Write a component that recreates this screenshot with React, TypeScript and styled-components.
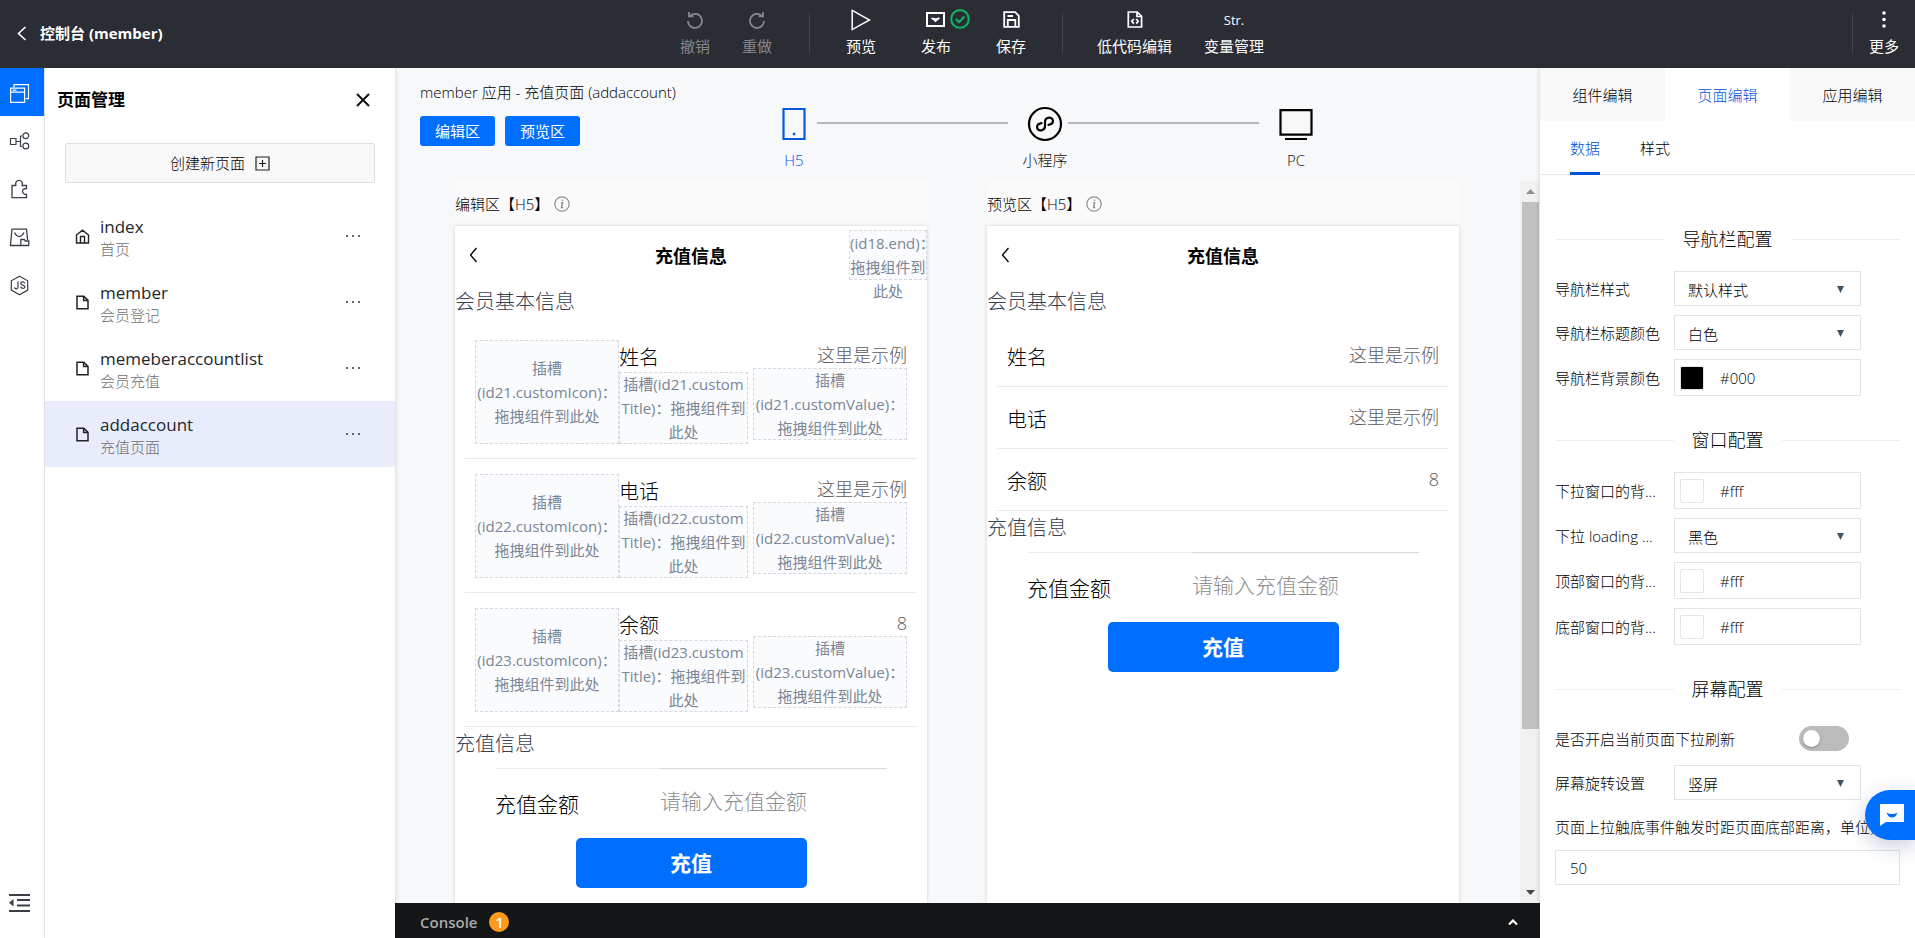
import React, { useState } from 'react';
import styled, { createGlobalStyle } from 'styled-components';

const BLUE = '#006eff';
const LINK = '#0052d9';

const GlobalStyle = createGlobalStyle`
  * { box-sizing: border-box; }
  body {
    margin: 0;
    font-family: "Open Sans", "Noto Sans CJK SC", sans-serif;
    font-size: 15px;
    line-height: 22px;
    font-weight: 300;
    color: #000;
    background: #fff;
  }
  button, input, select {
    font: inherit;
    color: inherit;
    margin: 0;
    padding: 0;
    border: 0;
    background: none;
    border-radius: 0;
  }
  button { cursor: pointer; }
  h1, h2, h3, p, ul { margin: 0; padding: 0; font-weight: inherit; font-size: inherit; }
  ul { list-style: none; }
  a { color: inherit; text-decoration: none; }
  svg { display: block; flex: none; }
`;

/* ---------- shell ---------- */

const Shell = styled.div`
  height: 100vh;
  display: flex;
  flex-direction: column;
  overflow: hidden;
`;

const Header = styled.header`
  flex: none;
  height: 68px;
  display: grid;
  grid-template-columns: 1fr auto 1fr;
  background: #2a2d34;
  color: #fff;
`;

const BackLink = styled.a`
  display: flex;
  align-items: center;
  gap: 13px;
  padding: 0 0 2px 17px;
  font-weight: 700;
`;

const Toolbar = styled.div`
  display: flex;
  padding-top: 7px;
  margin-left: 29px;
`;

const Tool = styled.button<{ $gap?: number }>`
  display: flex;
  flex-direction: column;
  align-items: center;
  align-self: flex-start;
  gap: 3px;
  margin-left: ${(p) => p.$gap ?? 0}px;
  font-weight: 400;
  white-space: nowrap;
  &:disabled { color: #85878b; cursor: default; }
`;

const ToolIcon = styled.span`
  position: relative;
  height: 25px;
  display: flex;
  align-items: center;
  justify-content: center;
  font-size: 13px;
`;

const StatusBadge = styled.span`
  position: absolute;
  left: 24px;
  top: 2px;
`;

const ToolDivider = styled.span<{ $gap?: number }>`
  width: 1px;
  height: 40px;
  margin-top: 6px;
  margin-left: ${(p) => p.$gap ?? 0}px;
  background: #43464c;
`;

const HeaderEnd = styled.div`
  display: flex;
  justify-content: flex-end;
  padding: 7px 16px 0 0;
`;

const Main = styled.div`
  flex: 1;
  min-height: 0;
  display: flex;
`;

/* ---------- left rail and pages ---------- */

const Rail = styled.nav`
  flex: none;
  width: 45px;
  display: flex;
  flex-direction: column;
  padding-bottom: 12px;
  border-right: 1px solid #e7e8ec;
`;

const RailButton = styled.button<{ $active?: boolean }>`
  height: 48px;
  padding: 2px 0 0 9px;
  display: flex;
  align-items: center;
  color: ${(p) => (p.$active ? '#fff' : '#3a3f47')};
  background: ${(p) => (p.$active ? BLUE : 'transparent')};
`;

const RailSpacer = styled.div`
  flex: 1;
`;

const PagesPanel = styled.aside`
  position: relative;
  flex: none;
  width: 350px;
  background: #fff;
  box-shadow: 1px 0 4px rgba(0, 0, 0, 0.12);
`;

const PanelHead = styled.div`
  display: flex;
  align-items: center;
  justify-content: space-between;
  padding: 20px 25px 0 12px;
  line-height: 24px;
`;

const PanelTitle = styled.h2`
  font-size: 17px;
  font-weight: 700;
`;

const CreateButton = styled.button`
  display: flex;
  align-items: center;
  justify-content: center;
  gap: 10px;
  width: 310px;
  height: 40px;
  margin: 31px 20px 20px;
  border: 1px solid #dcdfe3;
  border-radius: 2px;
  background: #f8f8f8;
`;

const PageItem = styled.li<{ $active?: boolean }>`
  display: flex;
  align-items: center;
  height: 66px;
  padding: 0 34px 0 30px;
  background: ${(p) => (p.$active ? '#e9edfb' : 'transparent')};
`;

const PageLink = styled.a`
  flex: 1;
  display: flex;
  align-items: center;
  gap: 10px;
`;

const PageText = styled.span`
  padding-top: 3px;
`;

const PageName = styled.span`
  display: block;
  font-size: 17px;
  font-weight: 400;
  color: #23262b;
`;

const PageNote = styled.span`
  display: block;
  color: #6f6f6f;
`;

/* ---------- canvas ---------- */

const Canvas = styled.main`
  flex: 1;
  min-width: 0;
  display: flex;
  flex-direction: column;
  background: #f6f8fa;
`;

const CanvasHead = styled.div`
  flex: none;
  height: 113px;
  display: flex;
  padding-left: 25px;
`;

const CanvasInfo = styled.div`
  flex: 0 0 351px;
  padding-top: 13px;
`;

const ModeButtons = styled.div`
  display: flex;
  gap: 10px;
  margin-top: 13px;
`;

const ModeButton = styled.button`
  width: 75px;
  height: 30px;
  border-radius: 3px;
  background: ${BLUE};
  color: #fff;
  font-weight: 400;
`;

const Stepper = styled.div`
  flex: 1;
  display: flex;
  padding-top: 38px;
`;

const Step = styled.button<{ $active?: boolean }>`
  width: 46px;
  display: flex;
  flex-direction: column;
  align-items: center;
  align-self: flex-start;
  gap: 7px;
  white-space: nowrap;
  color: ${(p) => (p.$active ? '#005be0' : '#111')};
`;

const StepLine = styled.span`
  flex: 0 1 191px;
  height: 2px;
  margin: 16px 14px 0 0;
  background: #b5b7ba;
`;

const Workspace = styled.div`
  flex: 1;
  min-height: 0;
  display: flex;
`;

const Devices = styled.div`
  flex: 1;
  min-width: 0;
  display: flex;
  gap: 60px;
  padding: 0 61px 0 60px;
  overflow: hidden;
`;

const DeviceColumn = styled.section`
  flex: 1;
  min-width: 0;
  display: flex;
  flex-direction: column;
`;

const DeviceLabel = styled.h3`
  flex: none;
  height: 44px;
  padding-top: 2px;
  display: flex;
  align-items: center;
  gap: 5px;
  background: #fafafa;
`;

const Device = styled.div`
  flex: 1 0 auto;
  margin-top: 1px;
  background: #fff;
  box-shadow: 0 0 4px rgba(0, 0, 0, 0.16);
`;

const DeviceNav = styled.div`
  position: relative;
  height: 59px;
  display: flex;
  align-items: center;
  justify-content: center;
  font-size: 18px;
  font-weight: 700;
`;

const NavBack = styled.button`
  position: absolute;
  left: 14px;
  top: 21px;
`;

const Slot = styled.div`
  display: flex;
  flex-direction: column;
  justify-content: center;
  border: 1px dashed #d5d9df;
  background: #fafbfd;
  color: #7b8696;
  font-size: 15px;
  font-weight: 400;
  line-height: 24px;
  text-align: center;
  white-space: nowrap;
`;

const NavSlot = styled(Slot)`
  position: absolute;
  right: 0;
  top: 4px;
  width: 78px;
  height: 50px;
  justify-content: flex-start;
`;

const SectionTitle = styled.h3`
  height: 34px;
  line-height: 34px;
  font-size: 20px;
  color: #38404f;
`;

const Cells = styled.ul`
  padding: 6px 10px 0;
`;

const Cell = styled.li<{ $edit?: boolean }>`
  display: grid;
  grid-template-columns: ${(p) => (p.$edit ? '144px 129px 1fr' : '1fr auto')};
  align-items: start;
  height: ${(p) => (p.$edit ? 134 : 62)}px;
  padding: 15px 10px 0;
  border-bottom: 1px solid #e8eaec;
`;

const CellTitle = styled.div`
  height: 32px;
  line-height: 36px;
  font-size: 20px;
`;

const CellValue = styled.div`
  height: 28px;
  line-height: 30px;
  font-size: 18px;
  color: #5c5c5c;
  text-align: right;
`;

const CellEnd = styled.div`
  margin-left: 5px;
`;

const IconSlot = styled(Slot)`
  height: 104px;
`;

const TextSlot = styled(Slot)`
  height: 72px;
`;

const FormRow = styled.div`
  display: flex;
  margin: 7px 40px 0;
  border-top: 1px solid #eceded;
`;

const FormLabel = styled.label`
  flex: 0 0 165px;
  height: 69px;
  padding-top: 2px;
  line-height: 66px;
  font-size: 21px;
`;

const FormInput = styled.input`
  flex: 1;
  min-width: 0;
  height: 65px;
  margin-top: -1px;
  border-top: 1px solid #d9d9d9;
  font-size: 21px;
  outline: none;
  &::placeholder { color: #8f8f8f; opacity: 1; }
`;

const SubmitButton = styled.button`
  display: block;
  width: 231px;
  height: 50px;
  margin: 0 auto;
  border-radius: 5px;
  background: ${BLUE};
  color: #fff;
  font-size: 21px;
  font-weight: 700;
`;

const ScrollTrack = styled.div`
  flex: none;
  width: 20px;
  display: flex;
  flex-direction: column;
  align-items: center;
  background: #f1f1f1;
`;

const ScrollArrow = styled.span`
  height: 21px;
  display: flex;
  align-items: center;
`;

const ScrollThumb = styled.span`
  width: 17px;
  flex: 0 0 73%;
  background: #c1c1c1;
`;

const ScrollRest = styled.span`
  flex: 1;
`;

const ConsoleBar = styled.div`
  flex: none;
  height: 35px;
  display: flex;
  align-items: center;
  gap: 12px;
  padding: 2px 22px 0 25px;
  background: #141618;
  color: #a9aaab;
  font-weight: 600;
`;

const Badge = styled.span`
  width: 20px;
  height: 20px;
  line-height: 20px;
  border-radius: 10px;
  background: #ff9a1f;
  color: #fff;
  text-align: center;
`;

const ConsoleToggle = styled.button`
  margin-left: auto;
`;

/* ---------- settings ---------- */

const Settings = styled.aside`
  position: relative;
  flex: none;
  width: 375px;
  background: #fff;
  box-shadow: -1px 0 4px rgba(0, 0, 0, 0.12);
`;

const MainTabs = styled.div`
  display: flex;
  height: 53px;
`;

const MainTab = styled.button<{ $active?: boolean }>`
  flex: 1;
  color: ${(p) => (p.$active ? LINK : '#000')};
  background: ${(p) => (p.$active ? '#fff' : '#f8f8f8')};
`;

const SubTabs = styled.div`
  display: flex;
  gap: 40px;
  height: 54px;
  padding-left: 30px;
  border-bottom: 1px solid #e7e8ea;
`;

const SubTab = styled.button<{ $active?: boolean }>`
  height: 54px;
  padding-top: 2px;
  color: ${(p) => (p.$active ? LINK : '#000')};
  border-bottom: 3px solid ${(p) => (p.$active ? LINK : 'transparent')};
`;

const Groups = styled.form`
  padding: 20px 15px 0;
`;

const GroupTitle = styled.h3`
  display: flex;
  align-items: center;
  gap: 18px;
  height: 28px;
  margin: 30px 0 18px;
  font-size: 18px;
  &::before, &::after {
    content: "";
    flex: 1;
    height: 1px;
    background: #eeeff0;
  }
`;

const Row = styled.div`
  display: flex;
  align-items: center;
  margin-bottom: 9px;
`;

const RowLabel = styled.label`
  flex: 0 0 119px;
  white-space: nowrap;
`;

const SelectWrap = styled.div`
  position: relative;
  width: 187px;
  height: 35px;
  border: 1px solid #e1e4e8;
`;

const SelectBox = styled.select`
  width: 100%;
  height: 33px;
  padding: 2px 0 0 13px;
  appearance: none;
`;

const SelectArrow = styled.svg`
  position: absolute;
  right: 16px;
  top: 14px;
  pointer-events: none;
`;

const ColorBox = styled.div`
  display: flex;
  align-items: center;
  gap: 16px;
  width: 187px;
  height: 37px;
  padding-left: 5px;
  border: 1px solid #e1e4e8;
`;

const Swatch = styled.button<{ $color: string }>`
  flex: none;
  width: 24px;
  height: 24px;
  border: 1px solid #e4e6e9;
  border-radius: 2px;
  background: ${(p) => p.$color};
`;

const ColorInput = styled.input`
  width: 120px;
`;

const SwitchRow = styled(Row)`
  height: 35px;
  justify-content: space-between;
  padding-right: 51px;
`;

const Switch = styled.input`
  appearance: none;
  width: 50px;
  height: 25px;
  padding: 4px;
  border-radius: 13px;
  background: #bbb;
  cursor: pointer;
  &::before {
    content: "";
    display: block;
    width: 17px;
    height: 17px;
    border-radius: 9px;
    background: #fff;
    box-shadow: 0 1px 2px rgba(0, 0, 0, 0.3);
  }
  &:checked { background: ${BLUE}; }
  &:checked::before { margin-left: 25px; }
`;

const LongLabel = styled.label`
  display: block;
  margin-top: 16px;
  overflow: hidden;
  white-space: nowrap;
`;

const NumberInput = styled.input`
  width: 100%;
  height: 35px;
  margin-top: 12px;
  padding-left: 14px;
  border: 1px solid #e1e4e8;
`;

const ChatButton = styled.button`
  position: absolute;
  right: 0;
  bottom: 98px;
  width: 50px;
  height: 50px;
  display: flex;
  align-items: center;
  justify-content: center;
  padding-left: 4px;
  border-radius: 25px 0 0 25px;
  background: ${BLUE};
  box-shadow: 0 6px 20px rgba(40, 60, 110, 0.25);
`;

/* ---------- icons ---------- */

const line = { fill: 'none', stroke: 'currentColor', strokeWidth: 1.5 } as const;

const UndoIcon = () => (
  <svg width="18" height="18" viewBox="0 0 18 18" {...line} strokeWidth={1.8}>
    <path d="M3 1v4.300h4.500M4.200 4.800A7 7 0 1 1 2 10" />
  </svg>
);
const RedoIcon = () => (
  <svg width="18" height="18" viewBox="0 0 18 18" {...line} strokeWidth={1.8}>
    <path d="M15 1v4.300h-4.500M13.800 4.800A7 7 0 1 0 16 10" />
  </svg>
);
const PlayIcon = () => (
  <svg width="20" height="22" viewBox="0 0 20 22" {...line}>
    <path d="M1.2 1.4 18.6 11 1.2 20.6z" />
  </svg>
);
const PublishIcon = () => (
  <svg width="19" height="15" viewBox="0 0 19 15" {...line} strokeWidth={2}>
    <path d="M1 1h17v13H1z" />
    <path d="M6 5.800c.6 2 6.400 2 7 0" />
    <path d="m8 7.500 1.500 1.400L11 7.500" />
  </svg>
);
const OkIcon = () => (
  <svg width="20" height="20" viewBox="0 0 20 20" fill="none" stroke="#12b060" strokeWidth="2.200">
    <circle cx="10" cy="10" r="8.800" />
    <path d="m5.800 10 3.200 3.200 5.400-5.600" />
  </svg>
);
const SaveIcon = () => (
  <svg width="17" height="17" viewBox="0 0 17 17" {...line} strokeWidth={1.8}>
    <path d="M1.200 1.200h11l3.600 3.600v11H1.200z" />
    <path d="M4.800 15.500V9h7.500v6.500M4.500 5h5.500" />
  </svg>
);
const CodeFileIcon = () => (
  <svg width="16" height="17" viewBox="0 0 16 17" {...line} strokeWidth={1.700}>
    <path d="M1.300 1h9l4.300 4.300V16H1.300zM10 1v4.500h4.500" />
    <path d="M6.800 8 4.800 10.300l2 2.300M9.200 8l2 2.300-2 2.300" />
  </svg>
);
const MoreIcon = () => (
  <svg width="4" height="17" viewBox="0 0 4 17" fill="currentColor">
    <circle cx="2" cy="2" r="1.800" /><circle cx="2" cy="8.500" r="1.800" /><circle cx="2" cy="15" r="1.800" />
  </svg>
);
const ChevronLeft = ({ w = 8, h = 13, s = 1.6 }: { w?: number; h?: number; s?: number }) => (
  <svg width={w + 2} height={h + 2} viewBox={`0 0 ${w + 2} ${h + 2}`} {...line} strokeWidth={s}>
    <path d={`M${w + 0.5} 1 1.500 ${(h + 2) / 2} ${w + 0.5} ${h + 1}`} />
  </svg>
);

const PagesIcon = () => (
  <svg width="21" height="21" viewBox="0 0 21 21" {...line} strokeWidth={1.200}>
    <path d="M5 4.500V1.600h14.500v14h-3" />
    <path d="M1.600 5.100h14v14.300h-14zM1.600 9.200h14" />
    <path d="M3.500 7.200h4" />
  </svg>
);
const FlowIcon = () => (
  <svg width="21" height="18" viewBox="0 0 21 18" {...line} strokeWidth={1.200}>
    <path d="M1.500 6.500h5.500v6H1.500zM7 9.500h4.500M13 4h-1.500v10.500H13" />
    <circle cx="16.800" cy="3.800" r="2.900" /><circle cx="16.800" cy="14" r="2.900" />
  </svg>
);
const PuzzleIcon = () => (
  <svg width="21" height="20" viewBox="0 0 21 20" {...line} strokeWidth={1.300}>
    <path d="M3 6.500h3.800C6 3.800 7.500 1.300 10 1.300s4 2.500 3.200 5.200H17.500v3c-2.600-.2-4 1-4 2.800s1.400 3.200 4 3V18.700H3z" />
  </svg>
);
const StoreIcon = () => (
  <svg width="21" height="19" viewBox="0 0 21 19" {...line} strokeWidth={1.300}>
    <path d="M11.500 17.500H1.400L3 1.200h14.500L18.600 12" />
    <path d="M5.500 4.500C7 7.500 8.500 8.500 10.200 8.500S13.500 7.500 15 4.500" />
    <path d="M11.800 17.500v-6h3.400l1.300 1.500h3.300v4.500z" />
  </svg>
);
const NodeIcon = () => (
  <svg width="21" height="21" viewBox="0 0 21 21" {...line} strokeWidth={1.200}>
    <path d="M10.500 1.300 18.700 5.800v9.300l-8.200 4.600-8.200-4.600V5.800z" />
    <path d="M9 6.500v5.800c0 1.900-3.100 2-3.500.2M15.700 8.300c-.4-2-4-1.900-4 0 0 2.300 4.200 1.300 4.200 3.500 0 2-4 2-4.400-.1" />
  </svg>
);
const CollapseIcon = () => (
  <svg width="21" height="20" viewBox="0 0 21 20" {...line} strokeWidth={2}>
    <path d="M0 2h21M8 7h13M8 12.500h13M0 18h21" />
    <path d="M4.500 6v7.500L0 9.800z" fill="currentColor" stroke="none" />
  </svg>
);
const CloseIcon = () => (
  <svg width="14" height="14" viewBox="0 0 14 14" fill="none" stroke="#111" strokeWidth="2">
    <path d="m1 1 12 12M13 1 1 13" />
  </svg>
);
const PlusBoxIcon = () => (
  <svg width="15" height="15" viewBox="0 0 15 15" fill="none" stroke="#222" strokeWidth="1.200">
    <path d="M1 1h13v13H1zM7.500 4v7M4 7.500h7" />
  </svg>
);
const HomeIcon = () => (
  <svg width="15" height="15" viewBox="0 0 15 15" fill="none" stroke="#222" strokeWidth="1.400">
    <path d="M1.500 6 7.500 1.200l6 4.800v8h-12zM5.500 14V7.500h4V14" />
  </svg>
);
const FileIcon = () => (
  <svg width="15" height="15" viewBox="0 0 15 15" fill="none" stroke="#222" strokeWidth="1.500">
    <path d="M2 1.200h6.800L13 5.400v8.400H2zM8.600 1.200v4.400H13" />
  </svg>
);
const DotsIcon = () => (
  <svg width="16" height="4" viewBox="0 0 16 4" fill="#333">
    <circle cx="2" cy="2" r="1" /><circle cx="8" cy="2" r="1" /><circle cx="14" cy="2" r="1" />
  </svg>
);
const PhoneIcon = () => (
  <svg width="36" height="36" viewBox="0 0 36 36" {...line} strokeWidth={2.200}>
    <path d="M7.500 3h21v30h-21z" />
    <path d="M16.800 28h2.500" strokeWidth={2.500} />
  </svg>
);
const MiniProgramIcon = () => (
  <svg width="36" height="36" viewBox="0 0 36 36" fill="none" stroke="#000" strokeWidth="2.200">
    <circle cx="18" cy="18" r="16" />
    <path d="M14.500 17.200c-2.800.4-4.600 2.200-4.400 4.300.3 2.300 2.600 3.400 4.800 2.800 2-.6 3.100-2 3.100-4v-4.600c0-2 1.200-3.500 3.200-4 2.200-.5 4.500.6 4.700 2.800.2 2.100-1.600 3.900-4.400 4.300" strokeLinecap="round" />
  </svg>
);
const DesktopIcon = () => (
  <svg width="36" height="36" viewBox="0 0 36 36" fill="none" stroke="#000" strokeWidth="2.200">
    <path d="M2.500 4.200h31v24.500h-31zM7 33h22" />
  </svg>
);
const InfoIcon = () => (
  <svg width="16" height="16" viewBox="0 0 16 16" fill="none" stroke="#8c8f94" strokeWidth="1.200">
    <circle cx="8" cy="8" r="7.200" />
    <path d="M7 6.600h1.600L7.500 11.600h1.700M8.600 3.600l-.2 1.200" strokeWidth="1.400" />
  </svg>
);
const CaretUp = () => (
  <svg width="10" height="8" viewBox="0 0 10 8" fill="none" stroke="#fff" strokeWidth="2.200">
    <path d="m1 6.500 4-4 4 4" />
  </svg>
);
const ChatIcon = () => (
  <svg width="24" height="22" viewBox="0 0 24 22">
    <path d="M0 0h24v18H6l-6 4z" fill="#fff" />
    <path d="M6.500 8.500c3.500 2 7.500 2 11 0-.8 3-2.800 5-5.500 5s-4.700-2-5.500-5z" fill={BLUE} />
  </svg>
);

/* ---------- parts ---------- */

const MemberDevice = ({ edit }: { edit?: boolean }) => {
  const id = edit ? 'amount-edit' : 'amount-preview';
  const rows = [
    { slot: 'id21', title: '姓名', value: '这里是示例' },
    { slot: 'id22', title: '电话', value: '这里是示例' },
    { slot: 'id23', title: '余额', value: '8' },
  ];
  return (
    <DeviceColumn>
      <DeviceLabel>
        {edit ? '编辑区【H5】' : '预览区【H5】'}
        <InfoIcon />
      </DeviceLabel>
      <Device>
        <DeviceNav>
          <NavBack aria-label="返回"><ChevronLeft w={7} h={14} s={1.3} /></NavBack>
          充值信息
          {edit && (
            <NavSlot>
              <span>(id18.end)：</span>
              <span>拖拽组件到</span>
              <span>此处</span>
            </NavSlot>
          )}
        </DeviceNav>
        <SectionTitle>会员基本信息</SectionTitle>
        <Cells>
          {rows.map((r) =>
            edit ? (
              <Cell key={r.slot} $edit>
                <IconSlot>
                  <span>插槽</span>
                  <span>({r.slot}.customIcon)：</span>
                  <span>拖拽组件到此处</span>
                </IconSlot>
                <div>
                  <CellTitle>{r.title}</CellTitle>
                  <TextSlot>
                    <span>插槽({r.slot}.custom</span>
                    <span>Title)：拖拽组件到</span>
                    <span>此处</span>
                  </TextSlot>
                </div>
                <CellEnd>
                  <CellValue>{r.value}</CellValue>
                  <TextSlot>
                    <span>插槽</span>
                    <span>({r.slot}.customValue)：</span>
                    <span>拖拽组件到此处</span>
                  </TextSlot>
                </CellEnd>
              </Cell>
            ) : (
              <Cell key={r.slot}>
                <CellTitle>{r.title}</CellTitle>
                <CellValue>{r.value}</CellValue>
              </Cell>
            ),
          )}
        </Cells>
        <SectionTitle>充值信息</SectionTitle>
        <FormRow>
          <FormLabel htmlFor={id}>充值金额</FormLabel>
          <FormInput id={id} placeholder="请输入充值金额" />
        </FormRow>
        <SubmitButton>充值</SubmitButton>
      </Device>
    </DeviceColumn>
  );
};

const SelectRow = ({ id, label, options }: { id: string; label: string; options: string[] }) => (
  <Row>
    <RowLabel htmlFor={id}>{label}</RowLabel>
    <SelectWrap>
      <SelectBox id={id}>
        {options.map((o) => <option key={o}>{o}</option>)}
      </SelectBox>
      <SelectArrow width="7" height="7" viewBox="0 0 7 7"><path d="M0 0h7L3.500 7z" fill="#3f5566" /></SelectArrow>
    </SelectWrap>
  </Row>
);

const ColorRow = ({ id, label, value }: { id: string; label: string; value: string }) => {
  const [color, setColor] = useState(value);
  return (
    <Row>
      <RowLabel htmlFor={id}>{label}</RowLabel>
      <ColorBox>
        <Swatch type="button" $color={color} aria-label={label} />
        <ColorInput id={id} value={color} onChange={(e) => setColor(e.target.value)} />
      </ColorBox>
    </Row>
  );
};

const pages = [
  { name: 'index', note: '首页', home: true },
  { name: 'member', note: '会员登记' },
  { name: 'memeberaccountlist', note: '会员充值' },
  { name: 'addaccount', note: '充值页面', active: true },
];

export default function App() {
  return (
    <>
      <GlobalStyle />
      <Shell>
        <Header>
          <BackLink href="#console"><ChevronLeft />控制台 (member)</BackLink>
          <Toolbar>
            <Tool disabled><ToolIcon><UndoIcon /></ToolIcon>撤销</Tool>
            <Tool disabled $gap={32}><ToolIcon><RedoIcon /></ToolIcon>重做</Tool>
            <ToolDivider $gap={37} />
            <Tool $gap={36}><ToolIcon><PlayIcon /></ToolIcon>预览</Tool>
            <Tool $gap={45}>
              <ToolIcon><PublishIcon /><StatusBadge><OkIcon /></StatusBadge></ToolIcon>发布
            </Tool>
            <Tool $gap={45}><ToolIcon><SaveIcon /></ToolIcon>保存</Tool>
            <ToolDivider $gap={36} />
            <Tool $gap={34}><ToolIcon><CodeFileIcon /></ToolIcon>低代码编辑</Tool>
            <Tool $gap={32}><ToolIcon>Str.</ToolIcon>变量管理</Tool>
          </Toolbar>
          <HeaderEnd>
            <ToolDivider />
            <Tool $gap={16}><ToolIcon><MoreIcon /></ToolIcon>更多</Tool>
          </HeaderEnd>
        </Header>

        <Main>
          <Rail>
            <RailButton $active aria-label="页面管理"><PagesIcon /></RailButton>
            <RailButton aria-label="流程"><FlowIcon /></RailButton>
            <RailButton aria-label="组件"><PuzzleIcon /></RailButton>
            <RailButton aria-label="素材"><StoreIcon /></RailButton>
            <RailButton aria-label="代码"><NodeIcon /></RailButton>
            <RailSpacer />
            <RailButton aria-label="收起"><CollapseIcon /></RailButton>
          </Rail>

          <PagesPanel>
            <PanelHead>
              <PanelTitle>页面管理</PanelTitle>
              <button aria-label="关闭"><CloseIcon /></button>
            </PanelHead>
            <CreateButton>创建新页面<PlusBoxIcon /></CreateButton>
            <ul>
              {pages.map((p) => (
                <PageItem key={p.name} $active={p.active}>
                  <PageLink href={`#${p.name}`}>
                    {p.home ? <HomeIcon /> : <FileIcon />}
                    <PageText>
                      <PageName>{p.name}</PageName>
                      <PageNote>{p.note}</PageNote>
                    </PageText>
                  </PageLink>
                  <button aria-label="更多操作"><DotsIcon /></button>
                </PageItem>
              ))}
            </ul>
          </PagesPanel>

          <Canvas>
            <CanvasHead>
              <CanvasInfo>
                <h1>member 应用 - 充值页面 (addaccount)</h1>
                <ModeButtons>
                  <ModeButton>编辑区</ModeButton>
                  <ModeButton>预览区</ModeButton>
                </ModeButtons>
              </CanvasInfo>
              <Stepper>
                <Step $active><PhoneIcon />H5</Step>
                <StepLine />
                <Step><MiniProgramIcon />小程序</Step>
                <StepLine />
                <Step><DesktopIcon />PC</Step>
              </Stepper>
            </CanvasHead>
            <Workspace>
              <Devices>
                <MemberDevice edit />
                <MemberDevice />
              </Devices>
              <ScrollTrack aria-hidden="true">
                <ScrollArrow>
                  <svg width="9" height="5" viewBox="0 0 9 5"><path d="M0 5h9L4.500 0z" fill="#8f8f8f" /></svg>
                </ScrollArrow>
                <ScrollThumb />
                <ScrollRest />
                <ScrollArrow>
                  <svg width="9" height="5" viewBox="0 0 9 5"><path d="M0 0h9L4.500 5z" fill="#444" /></svg>
                </ScrollArrow>
              </ScrollTrack>
            </Workspace>
            <ConsoleBar>
              Console
              <Badge>1</Badge>
              <ConsoleToggle aria-label="展开控制台"><CaretUp /></ConsoleToggle>
            </ConsoleBar>
          </Canvas>

          <Settings>
            <MainTabs>
              <MainTab>组件编辑</MainTab>
              <MainTab $active>页面编辑</MainTab>
              <MainTab>应用编辑</MainTab>
            </MainTabs>
            <SubTabs>
              <SubTab $active>数据</SubTab>
              <SubTab>样式</SubTab>
            </SubTabs>
            <Groups onSubmit={(e) => e.preventDefault()}>
              <GroupTitle>导航栏配置</GroupTitle>
              <SelectRow id="nav-style" label="导航栏样式" options={['默认样式']} />
              <SelectRow id="nav-title-color" label="导航栏标题颜色" options={['白色']} />
              <ColorRow id="nav-bg" label="导航栏背景颜色" value="#000" />
              <GroupTitle>窗口配置</GroupTitle>
              <ColorRow id="pull-bg" label="下拉窗口的背..." value="#fff" />
              <SelectRow id="pull-loading" label="下拉 loading ..." options={['黑色']} />
              <ColorRow id="top-bg" label="顶部窗口的背..." value="#fff" />
              <ColorRow id="bottom-bg" label="底部窗口的背..." value="#fff" />
              <GroupTitle>屏幕配置</GroupTitle>
              <SwitchRow>
                <label htmlFor="pull-refresh">是否开启当前页面下拉刷新</label>
                <Switch id="pull-refresh" type="checkbox" />
              </SwitchRow>
              <SelectRow id="rotate" label="屏幕旋转设置" options={['竖屏']} />
              <LongLabel htmlFor="bottom-distance">页面上拉触底事件触发时距页面底部距离，单位为px</LongLabel>
              <NumberInput id="bottom-distance" defaultValue="50" />
            </Groups>
            <ChatButton aria-label="在线咨询"><ChatIcon /></ChatButton>
          </Settings>
        </Main>
      </Shell>
    </>
  );
}
